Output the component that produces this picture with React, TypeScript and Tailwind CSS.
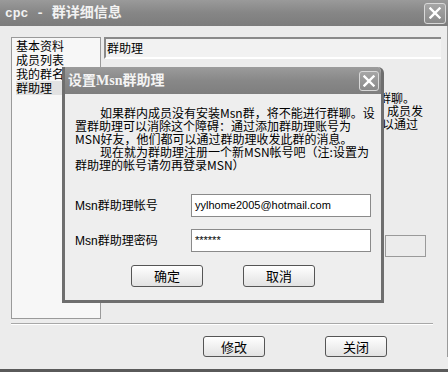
import React from "react";

const cjk = { fontFamily: '"Noto Sans CJK SC", "Liberation Sans", sans-serif' };
const sans = { fontFamily: '"Liberation Sans", "Noto Sans CJK SC", sans-serif' };
const titleFont = { fontFamily: '"Liberation Mono", "Noto Sans CJK SC", monospace' };
const dlgTitleFont = { fontFamily: '"Liberation Serif", "Noto Sans CJK SC", serif' };

function CloseBtn({ className = "" }: { className?: string }) {
  return (
    <div
      className={`flex items-center justify-center rounded-[3px] border border-[#d8d8d8] bg-gradient-to-b from-[#a6a6a6] to-[#8a8a8a] ${className}`}
    >
      <svg width="12" height="12" viewBox="0 0 12 12">
        <path d="M1.5 1.5 L10.5 10.5 M10.5 1.5 L1.5 10.5" stroke="#fff" strokeWidth="2.4" strokeLinecap="square" />
      </svg>
    </div>
  );
}

function Btn({ label, className = "" }: { label: string; className?: string }) {
  return (
    <div
      className={`flex items-center justify-center rounded-[3px] border border-[#555] bg-gradient-to-b from-white to-[#e2e2e2] text-[13px] text-black ${className}`}
      style={cjk}
    >
      {label}
    </div>
  );
}

export default function App() {
  return (
    <div className="relative h-[372px] w-[448px] overflow-hidden bg-[#ececec] text-black">
      {/* outer title bar */}
      <div className="flex h-[26px] items-center justify-between bg-gradient-to-b from-[#9a9a9a] via-[#868686] to-[#7c7c7c] pl-[5px] pr-[2px]">
        <span className="font-bold text-[#f2f2f2]" style={titleFont}>
          <span className="text-[13px]">cpc - </span>
          <span className="text-[14px]">群详细信息</span>
        </span>
        <CloseBtn className="h-[21px] w-[22px]" />
      </div>

      <div className="flex flex-col border-r border-[#9a9a9a]">
        <div className="flex gap-[3px] pl-[11px] pr-[6px] pt-[11px]">
          {/* left list */}
          <div className="flex h-[282px] w-[90px] flex-col border border-[#9a9a9a] bg-[#f7f7f7] px-[4px] pt-[1px] text-[12px] leading-[14px]" style={cjk}>
            <div>基本资料</div>
            <div>成员列表</div>
            <div className="whitespace-nowrap">我的群名片</div>
            <div className="w-[48px] bg-[#e2e2e2]">群助理</div>
          </div>
          {/* right panel */}
          <div className="flex flex-1 flex-col">
            <div className="flex h-[22px] items-center border-l-2 border-t-2 border-b-2 border-l-[#8a8a8a] border-t-[#8a8a8a] border-b-white bg-[#f2f2f2] pl-[1px] text-[12px]" style={cjk}>
              群助理
            </div>
            <div className="mt-[32px] flex flex-col items-end text-[12px] leading-[13px]" style={cjk}>
              <div className="pr-[26px]">群聊。</div>
              <div className="pr-[18px]">成员发</div>
              <div className="pr-[23px]">以通过</div>
            </div>
            <div className="ml-[281px] mt-[105px] h-[22px] w-[41px] border border-[#9a9a9a] bg-[#ececec]" />
          </div>
        </div>
        {/* separator */}
        <div className="ml-[11px] mr-[14px] mt-[4px] h-[2px] border-t border-b border-t-[#a8a8a8] border-b-white" />
        <div className="flex gap-[60px] pl-[203px] pt-[11px]">
          <Btn label="修改" className="h-[21px] w-[62px]" />
          <Btn label="关闭" className="h-[21px] w-[62px]" />
        </div>
      </div>
      <div className="absolute bottom-0 left-0 h-[3px] w-full bg-[#5a5a5a]" />

      {/* dialog */}
      <div className="absolute left-[62px] top-[67px] flex h-[236px] w-[322px] flex-col overflow-hidden rounded-tr-[6px] border-b-[3px] border-l-[3px] border-r-[3px] border-[#6e6e6e] bg-[#eeeeee]">
        <div className="-ml-[3px] -mr-[3px] flex h-[27px] items-center justify-between bg-gradient-to-b from-[#9c9c9c] via-[#888888] to-[#7e7e7e] pl-[6px] pr-[5px]">
          <span className="text-[14px] font-bold text-[#f4f4f4]" style={dlgTitleFont}>
            设置Msn群助理
          </span>
          <CloseBtn className="h-[20px] w-[20px]" />
        </div>
        <div className="flex flex-col pl-[10px] pt-[12px] text-[12px] leading-[13px] whitespace-nowrap" style={cjk}>
          <div className="pl-[25px]">如果群内成员没有安装Msn群，将不能进行群聊。设</div>
          <div>置群助理可以消除这个障碍：通过添加群助理账号为</div>
          <div>MSN好友，他们都可以通过群助理收发此群的消息。</div>
          <div className="pl-[25px]">现在就为群助理注册一个新MSN帐号吧（注:设置为</div>
          <div>群助理的帐号请勿再登录MSN）</div>
        </div>
        <div className="mt-[23px] flex items-center pl-[10px]">
          <div className="w-[116px] text-[12px]" style={sans}>Msn群助理帐号</div>
          <div className="flex h-[23px] w-[180px] items-center border border-[#8a8a8a] bg-white pl-[3px] text-[11px]" style={sans}>
            yylhome2005@hotmail.com
          </div>
        </div>
        <div className="mt-[12px] flex items-center pl-[10px]">
          <div className="w-[116px] text-[12px]" style={sans}>Msn群助理密码</div>
          <div className="flex h-[23px] w-[180px] items-center border border-[#8a8a8a] bg-white pl-[3px] text-[11px]" style={sans}>
            ******
          </div>
        </div>
        <div className="mt-[13px] flex gap-[40px] pl-[66px]">
          <Btn label="确定" className="h-[22px] w-[72px]" />
          <Btn label="取消" className="h-[22px] w-[72px]" />
        </div>
      </div>
    </div>
  );
}
